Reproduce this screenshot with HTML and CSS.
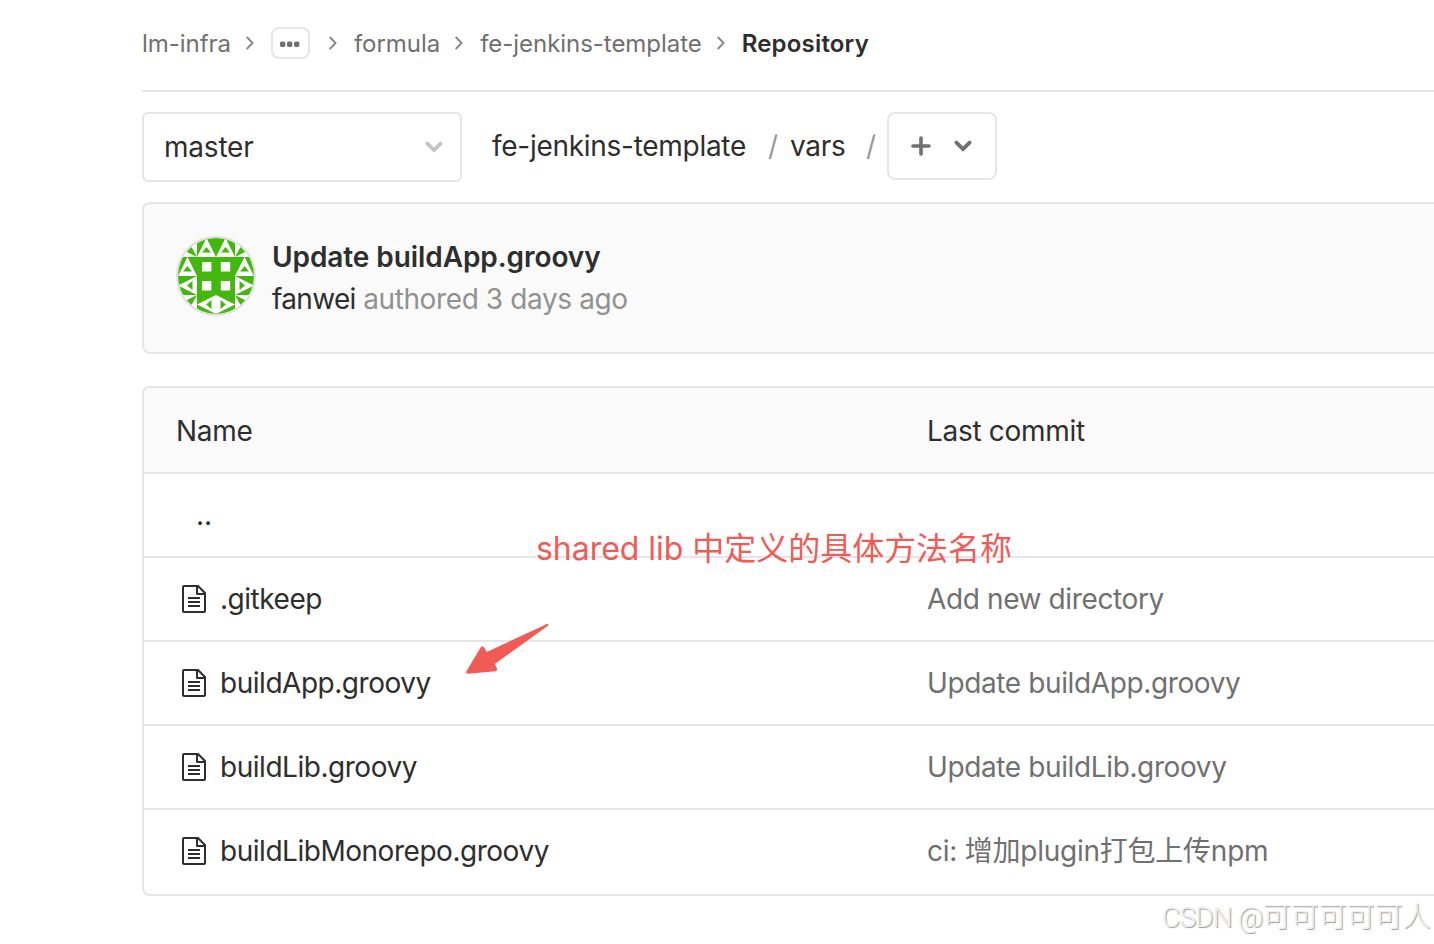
FILE: index.html
```
<!DOCTYPE html>
<html lang="en">
<head>
  <meta charset="UTF-8" />
  <meta name="viewport" content="width=device-width, initial-scale=1.0" />
  <title>Repository · fe-jenkins-template</title>
  <link rel="stylesheet" href="styles.css">
</head>
<body>
  <!-- Shared icons -->
  <svg class="sprite" aria-hidden="true">
    <symbol id="angle" viewBox="0 0 8 14">
      <path d="M1.2 1.5 L6.6 7 L1.2 12.5" fill="none" stroke="currentColor" stroke-width="1.8" stroke-linecap="round" stroke-linejoin="round" />
    </symbol>
    <symbol id="chevron" viewBox="0 0 18 12">
      <path d="M2.4 2.6 L9 9 L15.6 2.6" fill="none" stroke="currentColor" stroke-width="3.8" stroke-linecap="round" />
    </symbol>
    <symbol id="file" viewBox="0 0 24 28">
      <path d="M2 1 H16 L23 8 V26 Q23 27 22 27 H2 Q1 27 1 26 V2 Q1 1 2 1 Z M15 1 V9 H23" fill="none" stroke="currentColor" stroke-width="2" stroke-linejoin="round" />
      <path d="M6 13 H18 M6 17 H18 M6 21 H18" stroke="currentColor" stroke-width="2" />
    </symbol>
  </svg>

  <main class="page">
    <!-- Breadcrumbs -->
    <nav class="breadcrumbs">
      <a class="crumb">lm-infra</a>
      <svg class="angle"><use href="#angle" /></svg>
      <button class="more" aria-label="More">
        <svg width="20" height="6" viewBox="0 0 20 6"><rect x="0" y="0.5" width="5.4" height="5.4" rx="1.6" /><rect x="7" y="0.5" width="5.4" height="5.4" rx="1.6" /><rect x="14" y="0.5" width="5.4" height="5.4" rx="1.6" /></svg>
      </button>
      <svg class="angle wide"><use href="#angle" /></svg>
      <a class="crumb">formula</a>
      <svg class="angle"><use href="#angle" /></svg>
      <a class="crumb">fe-jenkins-template</a>
      <svg class="angle"><use href="#angle" /></svg>
      <strong class="crumb current">Repository</strong>
    </nav>

    <!-- Branch select and path -->
    <div class="tree-controls">
      <button class="branch">
        <span>master</span>
        <svg class="chevron"><use href="#chevron" /></svg>
      </button>
      <div class="path">
        <a class="path-root">fe-jenkins-template</a>
        <span class="slash">/</span>
        <a class="path-dir">vars</a>
        <span class="slash">/</span>
      </div>
      <button class="add" aria-label="Add">
        <svg class="plus" viewBox="0 0 20 20"><path d="M10 2 V18 M2 10 H18" stroke="currentColor" stroke-width="3.6" stroke-linecap="round" /></svg>
        <svg class="chevron"><use href="#chevron" /></svg>
      </button>
    </div>

    <!-- Last commit -->
    <section class="commit">
      <svg class="avatar" viewBox="0 0 76 76">
        <rect width="76" height="76" fill="#fff" />
        <g fill="#42b80f">
          <path d="M19 0H57V19H76V57H57V76H19V57H0V19H19Z" />
          <path d="M19 19L8 13.5L13 8Z" />
          <path d="M57 19L68 13.5L63 8Z" />
          <path d="M19 57L8 62.5L13 68Z" />
          <path d="M57 57L68 62.5L63 68Z" />
        </g>
        <g fill="#fff">
          <path d="M19 19L28.5 0L38 19L47.5 0L57 19Z" />
          <path d="M0 38L9.5 19L19 38Z M57 38L66.5 19L76 38Z" />
          <path d="M19 38L0 47.5L19 57Z M57 38L76 47.5L57 57Z" />
          <path d="M38 57L19 66.5L38 76L57 66.5Z" />
          <path d="M24 24h9.4v9.4H24ZM42.8 24h9.4v9.4h-9.4ZM24 43h9.4v9.4H24ZM42.8 43h9.4v9.4h-9.4Z" />
        </g>
        <g fill="#42b80f">
          <path d="M24 14.5L28.5 9L33 14.5ZM43 14.5L47.5 9L52 14.5Z" />
          <path d="M5 33.5L9.5 28L14 33.5ZM62 33.5L66.5 28L71 33.5Z" />
          <path d="M14.5 43L9 47.5L14.5 52ZM61.5 43L67 47.5L61.5 52Z" />
          <path d="M33.5 62L28 66.5L33.5 71ZM42.5 62L48 66.5L42.5 71Z" />
        </g>
      </svg>
      <div class="commit-text">
        <a class="commit-title">Update buildApp.groovy</a>
        <div class="commit-meta"><a class="author">fanwei</a> authored 3 days ago</div>
      </div>
    </section>

    <!-- File list -->
    <section class="files">
      <div class="row head"><span class="th">Name</span><span class="th">Last commit</span></div>
      <div class="row"><a class="up">..</a></div>
      <div class="row">
        <a class="name"><svg class="file"><use href="#file" /></svg><span>.gitkeep</span></a>
        <span class="msg">Add new directory</span>
      </div>
      <div class="row">
        <a class="name"><svg class="file"><use href="#file" /></svg><span>buildApp.groovy</span></a>
        <span class="msg">Update buildApp.groovy</span>
      </div>
      <div class="row">
        <a class="name"><svg class="file"><use href="#file" /></svg><span>buildLib.groovy</span></a>
        <span class="msg">Update buildLib.groovy</span>
      </div>
      <div class="row last">
        <a class="name"><svg class="file"><use href="#file" /></svg><span>buildLibMonorepo.groovy</span></a>
        <span class="msg mixed">ci: 增加plugin打包上传npm</span>
      </div>
    </section>
  </main>

  <!-- Notes drawn over the page -->
  <div class="note">shared lib 中定义的具体方法名称</div>
  <svg class="arrow" viewBox="0 0 84 52">
    <path d="M82.5 0.8 Q84.2 1.2 83 2.8 L29.8 41 L32 45.5 Q32.4 47.6 30.5 48.2 L3 50.8 Q0.4 50.6 1.6 48 L15.6 24.5 Q17.4 22.6 19.2 24.6 L21.8 28.9 Z" />
  </svg>
  <div class="watermark"><span class="brand">CSDN @</span>可可可可可人</div>
</body>
</html>
```

FILE: styles.css
```
/* Global Styles */
* { box-sizing: border-box; margin: 0; padding: 0; }
body {
  font-family: 'Inter', 'Noto Sans CJK SC', sans-serif;
  font-size: 28px;
  line-height: 40px;
  color: #2e2e2e;
  background: #fff;
  width: 1434px;
  height: 944px;
  position: relative;
  overflow: hidden;
  white-space: nowrap;
}
button {
  font: inherit;
  color: inherit;
  background: #fff;
  border: 2px solid #e5e5e5;
  border-radius: 8px;
}
.sprite { display: none; }
.page { padding-left: 142px; }
/* Breadcrumbs */
.breadcrumbs {
  display: flex;
  align-items: center;
  height: 92px;
  padding-bottom: 4px;
  border-bottom: 2px solid #e5e5e5;
  font-size: 24px;
  letter-spacing: -0.04px;
  color: #707070;
}
.crumb { padding-top: 2px; }
.current { color: #2e2e2e; font-weight: 600; letter-spacing: 0.18px; }
.angle {
  width: 8px;
  height: 14px;
  margin: 0 17px 0 15px;
  color: #868686;
}
.angle.wide { margin-left: 19px; }
.more {
  display: flex;
  align-items: center;
  justify-content: center;
  width: 39px;
  height: 32px;
}
.more svg { fill: #707070; position: relative; top: 1px; }
/* Branch select and path */
.tree-controls {
  display: flex;
  align-items: flex-start;
  padding-top: 20px;
}
.branch {
  display: flex;
  align-items: center;
  justify-content: space-between;
  width: 320px;
  height: 70px;
  padding: 0 17px 0 20px;
  border-radius: 6px;
  letter-spacing: -0.2px;
}
.chevron { width: 18px; height: 12px; }
.branch .chevron { color: #c4c4c4; }
.path {
  display: flex;
  width: 425px;
  padding: 14px 0 0 30px;
  letter-spacing: -0.28px;
}
.slash { color: #999; width: 8px; }
.path-root { width: 276px; }
.path-dir { margin-left: 14px; width: 76px; }
.add {
  display: flex;
  align-items: center;
  gap: 23px;
  width: 110px;
  height: 68px;
  padding-left: 22px;
  color: #707070;
}
.plus { width: 20px; height: 20px; }
/* Last commit */
.commit {
  display: flex;
  height: 152px;
  margin-top: 20px;
  padding: 32px;
  background: #fafafa;
  border: 2px solid #e5e5e5;
  border-right: 0;
  border-radius: 8px 0 0 8px;
}
.avatar {
  width: 80px;
  height: 80px;
  border: 2px solid #e0e0e0;
  border-radius: 50%;
}
.commit-text { padding-left: 16px; line-height: 42px; }
.commit-title { font-weight: 600; letter-spacing: -0.08px; }
.commit-meta { color: #919191; letter-spacing: -0.39px; }
.author { color: #2e2e2e; letter-spacing: -0.67px; }
/* File list */
.files {
  margin-top: 32px;
  border: 2px solid #e5e5e5;
  border-right: 0;
  border-radius: 8px 0 0 8px;
  overflow: hidden;
}
.row {
  display: grid;
  grid-template-columns: 751px 1fr;
  align-items: center;
  height: 84px;
  padding-left: 32px;
  border-bottom: 2px solid #e5e5e5;
}
.head {
  height: 86px;
  padding-top: 2px;
  background: #fafafa;
  letter-spacing: -0.3px;
}
.row.last { border-bottom: 0; padding-bottom: 2px; }
.up { padding-left: 20px; }
.name { display: flex; align-items: center; letter-spacing: -0.47px; }
.file {
  width: 24px;
  height: 28px;
  margin: 0 14px 0 6px;
}
.msg { color: #707070; letter-spacing: -0.38px; }
.msg.mixed { letter-spacing: -0.24px; }
/* Notes */
.note {
  position: absolute;
  left: 536px;
  top: 529px;
  font-size: 32px;
  letter-spacing: -0.03px;
  color: #f25b55;
}
.arrow {
  position: absolute;
  left: 465px;
  top: 623px;
  width: 84px;
  height: 52px;
  fill: #f25b55;
}
.watermark {
  position: absolute;
  left: 1162px;
  top: 898px;
  font-family: 'Roboto', 'Noto Sans CJK SC', sans-serif;
  font-size: 28px;
  font-weight: 300;
  color: #f0f0f0;
  text-shadow: 1px 1px 1px #999;
}
.brand { letter-spacing: -0.8px; }
```
